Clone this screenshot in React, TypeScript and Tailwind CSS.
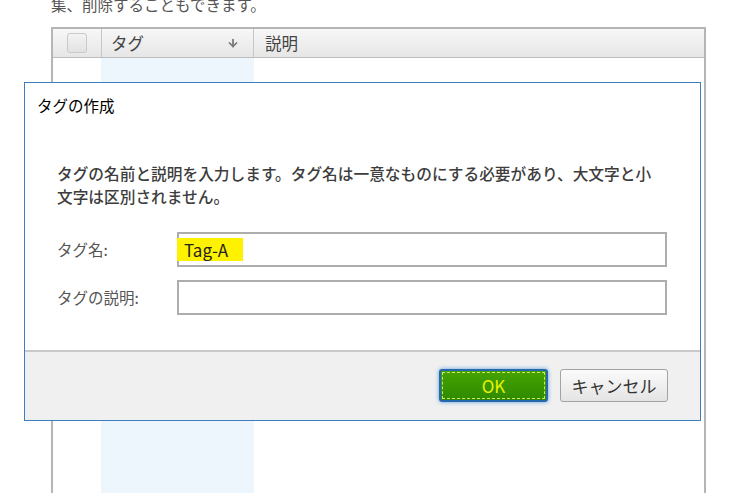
import { ArrowDown } from "lucide-react";

const font = { fontFamily: '"Noto Sans CJK JP", "Noto Sans", sans-serif' };

function TagTable() {
  return (
    <div className="w-[655px] h-[466px] border-2 border-b-0 border-[#b5b5b5] flex flex-col">
      <div className="flex h-[29px] shrink-0 border-b border-[#bdbdbd] bg-gradient-to-b from-[#f7f7f7] to-[#e6e6e6] text-[16.5px] text-[#444]">
        <div className="w-[48px] flex items-center pl-[14px]">
          <div className="w-[20px] h-[20px] rounded-[3px] border border-[#c9c9c9] bg-gradient-to-b from-[#f3f3f3] to-[#e2e2e2]" />
        </div>
        <div className="w-[152px] border-l border-[#c6c6c6] flex items-center justify-between pl-[9px] pr-[14px]">
          <span className="leading-none">タグ</span>
          <ArrowDown className="w-[12px] h-[12px] text-[#777]" strokeWidth={3.5} />
        </div>
        <div className="flex-1 border-l border-[#c6c6c6] flex items-center pl-[11px]">
          <span className="leading-none">説明</span>
        </div>
      </div>
      <div className="flex flex-1">
        <div className="w-[48px] bg-white" />
        <div className="w-[153px] bg-[#eef6fd]" />
        <div className="flex-1 bg-white" />
      </div>
    </div>
  );
}

function CreateTagDialog() {
  return (
    <div className="absolute left-[24px] top-[82px] w-[677px] h-[339px] border border-[#3d7ebf] bg-white flex flex-col">
      <div className="h-[267px] shrink-0 pl-[12px] pr-[32px] pt-[11px]">
        <div className="text-[15.5px] leading-[22px] text-black">タグの作成</div>
        <p className="mt-[46px] pl-[20px] text-[15.7px] leading-[23px] font-medium text-[#3d3d3d]">
          タグの名前と説明を入力します。タグ名は一意なものにする必要があり、大文字と小
          <br />
          文字は区別されません。
        </p>
        <div className="mt-[24px] pl-[20px] flex flex-col gap-[13px]">
          <div className="flex items-center">
            <span className="w-[120px] text-[15.5px] text-[#555]">タグ名:</span>
            <div className="w-[490px] h-[35px] border-2 border-[#adadad] bg-white flex items-center">
              <span className="ml-[-2px] h-[23px] pl-[7px] pr-[15px] bg-[#fff200] text-[17px] leading-[23px] text-[#222]">
                Tag-A
              </span>
            </div>
          </div>
          <div className="flex items-center">
            <span className="w-[120px] text-[15.5px] text-[#555]">タグの説明:</span>
            <div className="w-[490px] h-[35px] border-2 border-[#adadad] bg-white" />
          </div>
        </div>
      </div>
      <div className="flex-1 border-t-2 border-[#c9c9c9] bg-[#f0f0f0] flex justify-end items-start gap-[12px] pt-[17px] pr-[32px]">
        <button className="w-[109px] h-[33px] rounded-[3px] border-2 border-[#2767ad] bg-gradient-to-b from-[#45a300] to-[#2f8a00] shadow-[0_0_4px_#5a9ee0] p-[1px]">
          <div className="w-full h-full border border-dashed border-[#cfe86a] flex items-center justify-center text-[17px] text-[#e8f200]">
            OK
          </div>
        </button>
        <button className="w-[108px] h-[33px] rounded-[3px] border border-[#a3a3a3] bg-gradient-to-b from-[#fbfbfb] to-[#e4e4e4] text-[17px] text-[#333]">
          キャンセル
        </button>
      </div>
    </div>
  );
}

export default function App() {
  return (
    <div className="relative w-[730px] h-[493px] overflow-hidden bg-white" style={font}>
      <div className="pl-[51px]">
        <p className="-mt-[7px] h-[34px] text-[15.5px] leading-[22px] text-[#555]">
          集、削除することもできます。
        </p>
        <TagTable />
      </div>
      <CreateTagDialog />
    </div>
  );
}
